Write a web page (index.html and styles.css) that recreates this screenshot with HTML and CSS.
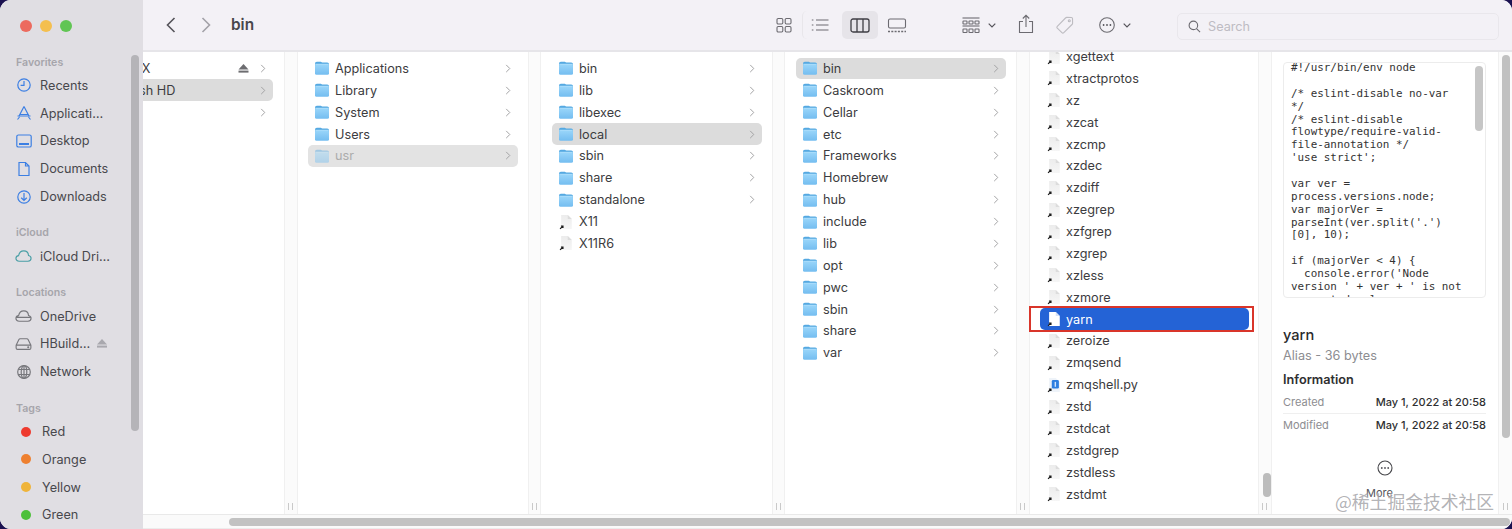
FILE: index.html
```html
<!DOCTYPE html>
<html lang="en">
<head>
<meta charset="utf-8">
<title>bin</title>
<link rel="stylesheet" href="styles.css">
</head>
<body>
<svg class="defs" width="0" height="0" aria-hidden="true">
  <defs>
    <linearGradient id="fb" x1="0" y1="0" x2="0" y2="1"><stop offset="0" stop-color="#9ad6fa"/><stop offset="1" stop-color="#74bdf0"/></linearGradient>
    <linearGradient id="dg" x1="0" y1="0" x2="0" y2="1"><stop offset="0" stop-color="#ececec"/><stop offset="1" stop-color="#f6f6f6"/></linearGradient>
    <symbol id="folder" viewBox="0 0 16 15">
      <path d="M1 3.2C1 2 1.7 1.2 2.9 1.2h3.4c.8 0 1.1.7 1.9.7h5c1.2 0 1.8.7 1.8 1.9V6H1z" fill="#55a9e2"/>
      <rect x="1" y="3.6" width="14" height="10.6" rx="1.5" fill="url(#fb)"/>
      <rect x="1" y="3.3" width="14" height=".7" fill="#b6e2fb"/>
    </symbol>
    <symbol id="alias" viewBox="0 0 16 18">
      <path d="M2.500 1h7.500l4.500 4.500V17h-12z" fill="url(#dg)"/>
      <path d="M10 1v4.500h4.500z" fill="#dcdcdc"/>
      <path d="M1.300 16.800l3-3M2.300 13.500h2.300v2.300" fill="none" stroke="#1c1c1c" stroke-width="1.300"/>
    </symbol>
    <symbol id="aliassel" viewBox="0 0 16 18">
      <path d="M2.500 1h7.500l4.500 4.500V17h-12z" fill="#fff"/>
      <path d="M10 1v4.500h4.500z" fill="#d5e2f8"/>
      <path d="M1.300 16.800l3-3M2.300 13.500h2.300v2.300" fill="none" stroke="#1c1c1c" stroke-width="1.300"/>
    </symbol>
    <symbol id="aliaspy" viewBox="0 0 16 18">
      <path d="M2.500 1h7.500l4.500 4.500V17h-12z" fill="#eef3f9"/>
      <rect x="5.500" y="3.500" width="8" height="9.500" rx="1.500" fill="#2f7fe0"/>
      <rect x="8.700" y="5.500" width="1.600" height="5.500" fill="#cfe2fa"/>
      <path d="M1.300 16.800l3-3M2.300 13.500h2.300v2.300" fill="none" stroke="#1c1c1c" stroke-width="1.300"/>
    </symbol>
    <symbol id="chev" viewBox="0 0 6 10">
      <path d="M1 1l4 4-4 4" fill="none" stroke="currentColor" stroke-width="1.1"/>
    </symbol>
    <symbol id="eject" viewBox="0 0 10 9">
      <path d="M5 0l5 5.4H0z" fill="currentColor"/><rect y="6.6" width="10" height="2" fill="currentColor"/>
    </symbol>
  </defs>
</svg>

<div class="window">
  <aside class="sidebar">
    <div class="lights"><span class="light red"></span><span class="light amber"></span><span class="light green"></span></div>
    <div class="sec-label">Favorites</div>
    <div class="side-row"><svg class="side-ic blue" viewBox="0 0 16 16"><circle cx="8" cy="8" r="6.2"/><path d="M8 4v4.4H4.6"/></svg><span>Recents</span></div>
    <div class="side-row"><svg class="side-ic blue" viewBox="0 0 16 16"><path d="M8 1.500L2.800 11.500M8 1.500l5.200 10M4 9.500h8M1.500 11h13M1.500 14.500l2-2.500M14.500 14.500l-2-2.500"/></svg><span>Applicati…</span></div>
    <div class="side-row"><svg class="side-ic blue" viewBox="0 0 16 16"><rect x=".8" y="2" width="14.4" height="12" rx="1.6"/><path d="M3 11h10" stroke-width="2"/></svg><span>Desktop</span></div>
    <div class="side-row"><svg class="side-ic blue" viewBox="0 0 16 16"><path d="M3 1.500h6.500L13 5v9.500H3zM9.500 1.500V5H13"/></svg><span>Documents</span></div>
    <div class="side-row"><svg class="side-ic blue" viewBox="0 0 16 16"><circle cx="8" cy="8" r="6.2"/><path d="M8 4v7.4M5.2 8.800L8 11.500l2.800-2.700"/></svg><span>Downloads</span></div>

    <div class="sec-label sec-gap">iCloud</div>
    <div class="side-row"><svg class="side-ic wide teal" viewBox="0 0 18 14"><path d="M4.500 12.500C2.500 12.500 1 11.200 1 9.500 1 8 2.100 6.800 3.800 6.600 4.400 3.600 6.600 1.600 9.300 1.600c2.800 0 4.800 2 5 4.800 1.600.3 2.700 1.500 2.700 3 0 1.800-1.400 3.100-3.300 3.100z"/></svg><span>iCloud Dri…</span></div>

    <div class="sec-label sec-gap">Locations</div>
    <div class="side-row"><svg class="side-ic wide gray" viewBox="0 0 18 14"><path d="M4.500 12.500C2.500 12.500 1 11.200 1 9.500 1 8 2.100 6.800 3.800 6.600 4.400 3.600 6.600 1.600 9.300 1.600c2.800 0 4.800 2 5 4.800 1.600.3 2.700 1.500 2.700 3 0 1.800-1.400 3.100-3.300 3.100zM1.400 8.500h15.200"/></svg><span>OneDrive</span></div>
    <div class="side-row"><svg class="side-ic wide gray" viewBox="0 0 18 14"><path d="M1.200 8.200L4 2.400c.3-.6.8-1 1.500-1h7c.7 0 1.200.4 1.500 1l2.800 5.800v3c0 .9-.7 1.500-1.500 1.500H2.700c-.8 0-1.500-.6-1.500-1.500zM1.200 8.200h15.600"/><circle cx="14" cy="10.500" r=".5"/></svg><span>HBuild…</span><svg class="side-eject"><use href="#eject"/></svg></div>
    <div class="side-row"><svg class="side-ic gray" viewBox="0 0 16 16"><circle cx="8" cy="8" r="6.300"/><ellipse cx="8" cy="8" rx="2.800" ry="6.300"/><path d="M2.300 5.500h11.400M2.300 10.500h11.400M8 1.700v12.600"/></svg><span>Network</span></div>

    <div class="sec-label sec-gap">Tags</div>
    <div class="side-row"><span class="dot d-red"></span><span>Red</span></div>
    <div class="side-row"><span class="dot d-orange"></span><span>Orange</span></div>
    <div class="side-row"><span class="dot d-yellow"></span><span>Yellow</span></div>
    <div class="side-row"><span class="dot d-green"></span><span>Green</span></div>
    <div class="side-thumb"></div>
  </aside>

  <main class="main">
    <header class="toolbar">
      <svg class="nav-ic" viewBox="0 0 12 18"><path d="M9.500 2L2.500 9l7 7"/></svg>
      <svg class="nav-ic nav-fwd" viewBox="0 0 12 18"><path d="M2.500 2l7 7-7 7"/></svg>
      <div class="title">bin</div>

      <div class="views">
        <div class="view"><svg class="tb-ic" viewBox="0 0 16 16"><rect x="1" y="1.500" width="5.800" height="5.500" rx="1.200"/><rect x="9.200" y="1.500" width="5.800" height="5.500" rx="1.200"/><rect x="1" y="9.500" width="5.800" height="5.500" rx="1.200"/><rect x="9.200" y="9.500" width="5.800" height="5.500" rx="1.200"/></svg></div>
        <div class="view view-list"><svg class="tb-ic tb-wide" viewBox="0 0 18 14"><path d="M5 2h12.500M5 7h12.500M5 12h12.500M.8 2h1.600M.8 7h1.600M.8 12h1.600"/></svg></div>
        <div class="view view-on"><svg class="tb-ic tb-col" viewBox="0 0 20 15"><rect x="1" y="1" width="18" height="13" rx="2"/><path d="M7 1v13M13 1v13"/></svg></div>
        <div class="view view-last"><svg class="tb-ic tb-col" viewBox="0 0 20 15"><rect x="1.500" y="1" width="17" height="9" rx="1.500"/><path d="M1 13.500h18" stroke-width="1.600" stroke-dasharray="2 1.300"/></svg></div>
      </div>
      <svg class="tb-ic tb-group" viewBox="0 0 18 17"><path d="M.5 1h17"/><rect x="1" y="4" width="4" height="3" rx=".5"/><rect x="7" y="4" width="4" height="3" rx=".5"/><rect x="13" y="4" width="4" height="3" rx=".5"/><path d="M.5 9h17"/><rect x="1" y="12" width="4" height="3.500" rx=".5"/><rect x="7" y="12" width="4" height="3.500" rx=".5"/><rect x="13" y="12" width="4" height="3.500" rx=".5"/></svg>
      <svg class="tb-chev" viewBox="0 0 8 5"><path d="M.7.700L4 4 7.300.700"/></svg>
      <svg class="tb-ic tb-share" viewBox="0 0 16 20"><path d="M8 13V1.500M4.800 4.500L8 1.300l3.200 3.200M5 7.500H1.500v11h13v-11H11"/></svg>
      <svg class="tb-ic tb-tag" viewBox="0 0 18 18"><path d="M1.300 10.300L9.500 2c.4-.4.800-.6 1.300-.6l4.600.1c.7 0 1.100.5 1.100 1.100l.1 4.600c0 .5-.2.900-.6 1.300l-8.200 8.200c-.6.600-1.300.6-1.900 0l-4.600-4.500c-.6-.6-.6-1.300 0-1.900z"/><circle cx="13.300" cy="4.700" r="1"/></svg>
      <svg class="tb-ic tb-more" viewBox="0 0 16 16"><circle cx="8" cy="8" r="7.300"/><circle class="fill" cx="4.600" cy="8" r=".9"/><circle class="fill" cx="8" cy="8" r=".9"/><circle class="fill" cx="11.400" cy="8" r=".9"/></svg>
      <svg class="tb-chev" viewBox="0 0 8 5"><path d="M.7.700L4 4 7.300.700"/></svg>
      <div class="search">
        <svg class="search-ic" viewBox="0 0 14 14"><circle cx="5.800" cy="5.800" r="4.600"/><path d="M9.200 9.200L13 13"/></svg>
        <span>Search</span>
      </div>
    </header>

    <div class="browser">
      <section class="col col-first">
        <div class="list list-first">
          <div class="row"><svg class="ic"></svg><span class="name">Mac OS X</span><svg class="row-eject"><use href="#eject"/></svg><svg class="chev"><use href="#chev"/></svg></div>
          <div class="row sel"><svg class="ic"></svg><span class="name">Macintosh HD</span><svg class="chev"><use href="#chev"/></svg></div>
          <div class="row"><svg class="ic"></svg><span class="name">Data</span><svg class="chev"><use href="#chev"/></svg></div>
        </div>
      </section>
      <div class="split s14"><i class="grip"></i></div>

      <section class="col c230">
        <div class="row"><svg class="ic"><use href="#folder"/></svg><span class="name">Applications</span><svg class="chev"><use href="#chev"/></svg></div>
        <div class="row"><svg class="ic"><use href="#folder"/></svg><span class="name">Library</span><svg class="chev"><use href="#chev"/></svg></div>
        <div class="row"><svg class="ic"><use href="#folder"/></svg><span class="name">System</span><svg class="chev"><use href="#chev"/></svg></div>
        <div class="row"><svg class="ic"><use href="#folder"/></svg><span class="name">Users</span><svg class="chev"><use href="#chev"/></svg></div>
        <div class="row sel hidden-item"><svg class="ic"><use href="#folder"/></svg><span class="name">usr</span><svg class="chev"><use href="#chev"/></svg></div>
      </section>
      <div class="split s13"><i class="grip"></i></div>

      <section class="col c231">
        <div class="row"><svg class="ic"><use href="#folder"/></svg><span class="name">bin</span><svg class="chev"><use href="#chev"/></svg></div>
        <div class="row"><svg class="ic"><use href="#folder"/></svg><span class="name">lib</span><svg class="chev"><use href="#chev"/></svg></div>
        <div class="row"><svg class="ic"><use href="#folder"/></svg><span class="name">libexec</span><svg class="chev"><use href="#chev"/></svg></div>
        <div class="row sel"><svg class="ic"><use href="#folder"/></svg><span class="name">local</span><svg class="chev"><use href="#chev"/></svg></div>
        <div class="row"><svg class="ic"><use href="#folder"/></svg><span class="name">sbin</span><svg class="chev"><use href="#chev"/></svg></div>
        <div class="row"><svg class="ic"><use href="#folder"/></svg><span class="name">share</span><svg class="chev"><use href="#chev"/></svg></div>
        <div class="row"><svg class="ic"><use href="#folder"/></svg><span class="name">standalone</span><svg class="chev"><use href="#chev"/></svg></div>
        <div class="row"><svg class="ic"><use href="#alias"/></svg><span class="name">X11</span></div>
        <div class="row"><svg class="ic"><use href="#alias"/></svg><span class="name">X11R6</span></div>
      </section>
      <div class="split s13"><i class="grip"></i></div>

      <section class="col c231">
        <div class="row sel"><svg class="ic"><use href="#folder"/></svg><span class="name">bin</span><svg class="chev"><use href="#chev"/></svg></div>
        <div class="row"><svg class="ic"><use href="#folder"/></svg><span class="name">Caskroom</span><svg class="chev"><use href="#chev"/></svg></div>
        <div class="row"><svg class="ic"><use href="#folder"/></svg><span class="name">Cellar</span><svg class="chev"><use href="#chev"/></svg></div>
        <div class="row"><svg class="ic"><use href="#folder"/></svg><span class="name">etc</span><svg class="chev"><use href="#chev"/></svg></div>
        <div class="row"><svg class="ic"><use href="#folder"/></svg><span class="name">Frameworks</span><svg class="chev"><use href="#chev"/></svg></div>
        <div class="row"><svg class="ic"><use href="#folder"/></svg><span class="name">Homebrew</span><svg class="chev"><use href="#chev"/></svg></div>
        <div class="row"><svg class="ic"><use href="#folder"/></svg><span class="name">hub</span><svg class="chev"><use href="#chev"/></svg></div>
        <div class="row"><svg class="ic"><use href="#folder"/></svg><span class="name">include</span><svg class="chev"><use href="#chev"/></svg></div>
        <div class="row"><svg class="ic"><use href="#folder"/></svg><span class="name">lib</span><svg class="chev"><use href="#chev"/></svg></div>
        <div class="row"><svg class="ic"><use href="#folder"/></svg><span class="name">opt</span><svg class="chev"><use href="#chev"/></svg></div>
        <div class="row"><svg class="ic"><use href="#folder"/></svg><span class="name">pwc</span><svg class="chev"><use href="#chev"/></svg></div>
        <div class="row"><svg class="ic"><use href="#folder"/></svg><span class="name">sbin</span><svg class="chev"><use href="#chev"/></svg></div>
        <div class="row"><svg class="ic"><use href="#folder"/></svg><span class="name">share</span><svg class="chev"><use href="#chev"/></svg></div>
        <div class="row"><svg class="ic"><use href="#folder"/></svg><span class="name">var</span><svg class="chev"><use href="#chev"/></svg></div>
      </section>
      <div class="split s14"><i class="grip"></i></div>

      <section class="col c228">
        <div class="list list-scrolled">
          <div class="row"><svg class="ic"><use href="#alias"/></svg><span class="name">xgettext</span></div>
          <div class="row"><svg class="ic"><use href="#alias"/></svg><span class="name">xtractprotos</span></div>
          <div class="row"><svg class="ic"><use href="#alias"/></svg><span class="name">xz</span></div>
          <div class="row"><svg class="ic"><use href="#alias"/></svg><span class="name">xzcat</span></div>
          <div class="row"><svg class="ic"><use href="#alias"/></svg><span class="name">xzcmp</span></div>
          <div class="row"><svg class="ic"><use href="#alias"/></svg><span class="name">xzdec</span></div>
          <div class="row"><svg class="ic"><use href="#alias"/></svg><span class="name">xzdiff</span></div>
          <div class="row"><svg class="ic"><use href="#alias"/></svg><span class="name">xzegrep</span></div>
          <div class="row"><svg class="ic"><use href="#alias"/></svg><span class="name">xzfgrep</span></div>
          <div class="row"><svg class="ic"><use href="#alias"/></svg><span class="name">xzgrep</span></div>
          <div class="row"><svg class="ic"><use href="#alias"/></svg><span class="name">xzless</span></div>
          <div class="row"><svg class="ic"><use href="#alias"/></svg><span class="name">xzmore</span></div>
          <div class="row active"><svg class="ic"><use href="#aliassel"/></svg><span class="name">yarn</span></div>
          <div class="row"><svg class="ic"><use href="#alias"/></svg><span class="name">zeroize</span></div>
          <div class="row"><svg class="ic"><use href="#alias"/></svg><span class="name">zmqsend</span></div>
          <div class="row"><svg class="ic"><use href="#aliaspy"/></svg><span class="name">zmqshell.py</span></div>
          <div class="row"><svg class="ic"><use href="#alias"/></svg><span class="name">zstd</span></div>
          <div class="row"><svg class="ic"><use href="#alias"/></svg><span class="name">zstdcat</span></div>
          <div class="row"><svg class="ic"><use href="#alias"/></svg><span class="name">zstdgrep</span></div>
          <div class="row"><svg class="ic"><use href="#alias"/></svg><span class="name">zstdless</span></div>
          <div class="row"><svg class="ic"><use href="#alias"/></svg><span class="name">zstdmt</span></div>
        </div>
      </section>
      <div class="split s14"><i class="grip"></i><i class="col-thumb"></i></div>

      <section class="preview">
        <div class="code-box">
<pre class="code">#!/usr/bin/env node

/* eslint-disable no-var
*/
/* eslint-disable
flowtype/require-valid-
file-annotation */
'use strict';

var ver =
process.versions.node;
var majorVer =
parseInt(ver.split('.')
[0], 10);

if (majorVer &lt; 4) {
  console.error('Node
version ' + ver + ' is not
supported, please use</pre>
          <i class="code-thumb"></i>
        </div>
        <div class="p-name">yarn</div>
        <div class="p-kind">Alias - 36 bytes</div>
        <div class="p-head">Information</div>
        <div class="p-row p-line"><span class="p-key">Created</span><span class="p-val">May 1, 2022 at 20:58</span></div>
        <div class="p-row"><span class="p-key">Modified</span><span class="p-val">May 1, 2022 at 20:58</span></div>
        <svg class="p-more" viewBox="0 0 16 16"><circle cx="8" cy="8" r="7"/><circle class="fill" cx="4.800" cy="8" r=".9"/><circle class="fill" cx="8" cy="8" r=".9"/><circle class="fill" cx="11.200" cy="8" r=".9"/></svg>
        <div class="p-more-label">More</div>
      </section>
      <div class="split s14 split-last"><i class="grip"></i><i class="preview-thumb"></i></div>
    </div>

    <div class="hbar"><i class="hthumb"></i></div>
  </main>

  <div class="annot"></div>
  <div class="watermark">@稀土掘金技术社区</div>
</div>
</body>
</html>
```
FILE: styles.css
```css
* { box-sizing: border-box; }
html, body { margin: 0; height: 100%; }
body {
  background: #1b1150;
  overflow: hidden;
  font-family: Inter, "Noto Sans", sans-serif;
  font-size: 12.7px;
  color: #3c3c40;
}
.defs { position: absolute; }
.window {
  position: relative;
  display: flex;
  width: 1512px;
  height: 529px;
  border-radius: 11px;
  overflow: hidden;
  background: #fff;
}

/* sidebar */
.sidebar {
  position: relative;
  flex: 0 0 143px;
  background: #e0dee3;
  padding-left: 16px;
}
.lights { display: flex; gap: 8px; height: 53.5px; padding: 20px 0 0 4px; }
.light { width: 12px; height: 12px; border-radius: 50%; }
.red { background: #ec6a5e; }
.amber { background: #f4bf4f; }
.green { background: #61c554; }
.sec-label {
  height: 18px;
  line-height: 18px;
  font-size: 10.6px;
  font-weight: 600;
  color: #a6a5ab;
}
.sec-gap { margin-top: 14px; }
.side-row {
  display: flex;
  align-items: center;
  height: 27.8px;
  color: #48484d;
}
.side-ic {
  flex: 0 0 16px;
  width: 16px;
  height: 16px;
  margin-right: 8px;
  fill: none;
  stroke-width: 1.2;
}
.side-ic.wide { flex-basis: 17px; width: 17px; height: 14px; margin-left: -1px; }
.blue { stroke: #3c7fe3; }
.teal { stroke: #4a9fa6; }
.gray { stroke: #77777c; }
.side-eject { width: 10px; height: 9px; margin-left: 7px; color: #a9a8ae; }
.dot { width: 10px; height: 10px; margin: 0 11px 0 5px; border-radius: 50%; }
.d-red { background: #ee3a2e; }
.d-orange { background: #ee8030; }
.d-yellow { background: #efb43a; }
.d-green { background: #4cc03a; }
.side-thumb {
  position: absolute;
  left: 131px;
  top: 55px;
  width: 8px;
  height: 376px;
  border-radius: 4px;
  background: #b5b4b8;
}

/* main */
.main { flex: 1; min-width: 0; display: flex; flex-direction: column; }
.toolbar {
  flex: 0 0 52px;
  display: flex;
  align-items: center;
  padding: 0 13px 0 22px;
  background: #f3f1f6;
  border-bottom: 2px solid #e6e5e9;
}
.nav-ic {
  width: 12px;
  height: 18px;
  fill: none;
  stroke: #55545a;
  stroke-width: 1.6;
}
.nav-fwd { margin-left: 23px; stroke: #a3a2a8; }
.title {
  margin-left: 19px;
  font-size: 15.4px;
  font-weight: 600;
  color: #47464b;
  margin-bottom: 1px;
}
.views { display: flex; align-items: center; margin-left: auto; }
.view {
  display: flex;
  align-items: center;
  justify-content: center;
  width: 36px;
  height: 28px;
  border-radius: 5px;
}
.view-list { border-left: 1px solid #e8e6ea; margin-right: 4px; padding-right: 1px; }
.view-on { background: #e6e4e9; }
.view-last { margin-left: 1px; }
.tb-ic { flex: none; fill: none; stroke: #6c6b71; stroke-width: 1.1; width: 16px; height: 16px; }
.tb-ic .fill, .p-more .fill { fill: #55545a; stroke: none; }
.tb-wide { width: 18px; height: 14px; }
.tb-col { width: 20px; height: 15px; }
.view-on .tb-col { stroke: #3f3e44; stroke-width: 1.3; }
.tb-group { width: 18px; height: 17px; margin-left: 47px; }
.tb-chev {
  flex: none;
  width: 8px;
  height: 5px;
  margin-left: 8px;
  fill: none;
  stroke: #55545a;
  stroke-width: 1.2;
}
.tb-share { width: 16px; height: 20px; margin-left: 22px; margin-bottom: 2px; }
.tb-tag { width: 18px; height: 18px; margin-left: 22px; stroke: #bdbcc1; }
.tb-more { margin-left: 25px; }
.search {
  flex: 0 0 322px;
  display: flex;
  align-items: center;
  gap: 7px;
  height: 27px;
  margin-left: 46px;
  margin-top: 2px;
  padding-left: 10px;
  border: 1px solid #e9e7ec;
  border-radius: 5px;
  color: #bebcc3;
}
.search-ic { width: 13px; height: 13px; fill: none; stroke: #6c6b71; stroke-width: 1.2; }

/* columns */
.browser { flex: 1; min-height: 0; display: flex; background: #fff; overflow: hidden; }
.col { flex: none; height: 100%; padding-top: 5.5px; overflow: hidden; }
.col-first { width: 141px; display: flex; justify-content: flex-end; }
.list-first { flex: 0 0 231px; padding: 0 11px; }
.c230 { width: 230px; padding-left: 10px; padding-right: 10px; }
.c231 { width: 231px; padding-left: 11px; padding-right: 10px; }
.c228 { width: 228px; padding-left: 10px; padding-right: 9px; }
.c228 .ic { margin-right: 4px; }
.list-scrolled { margin-top: -11.9px; }
.row {
  display: flex;
  align-items: center;
  height: 21.875px;
  padding: 0 7px 0 6px;
  border-radius: 5px;
}
.ic { flex: 0 0 16px; width: 16px; height: 16px; margin-right: 5px; }
.name { flex: 1; white-space: nowrap; }
.chev { flex: none; width: 6px; height: 9px; color: #a2a2a4; }
.row-eject { flex: none; width: 11px; height: 9px; margin-right: 11px; color: #6d6d70; }
.sel { background: #dcdcdc; }
.hidden-item { background: #e3e3e3; color: #acacac; }
.hidden-item .ic { opacity: .45; }
.active { background: #2463d6; color: #fff; }
.split {
  position: relative;
  flex: none;
  height: 100%;
  background: #fbfbfb;
  border-left: 1px solid #f0f0f0;
  border-right: 1px solid #f0f0f0;
}
.s13 { width: 13px; }
.s14 { width: 14px; }
.split-last { border-right: 0; }
.grip {
  position: absolute;
  bottom: 4px;
  left: 50%;
  width: 5px;
  height: 7px;
  margin-left: -3px;
  border-left: 1.500px solid #c9c9c9;
  border-right: 1.500px solid #c9c9c9;
}
.col-thumb {
  position: absolute;
  top: 421px;
  left: 4px;
  width: 8px;
  height: 24px;
  border-radius: 4px;
  background: #bcbcbc;
}
.preview-thumb {
  position: absolute;
  top: 3px;
  left: 3px;
  width: 8px;
  height: 383px;
  border-radius: 4px;
  background: #c1c1c1;
}

/* preview */
.preview {
  flex: none;
  display: flex;
  flex-direction: column;
  width: 226px;
  height: 100%;
  padding: 10px 12px 0 11px;
  overflow: hidden;
}
.code-box {
  position: relative;
  flex: 0 0 236px;
  padding-left: 7px;
  border: 1px solid #ececec;
  border-radius: 4px;
  overflow: hidden;
}
.code {
  margin: 0;
  font-family: "DejaVu Sans Mono", "Liberation Mono", monospace;
  font-size: 10.9px;
  line-height: 12.87px;
  color: #333;
  position: relative;
  top: -1px;
}
.code-thumb {
  position: absolute;
  top: 3px;
  right: 2px;
  width: 8px;
  height: 65px;
  border-radius: 4px;
  background: #c6c6c6;
}
.p-name { height: 20px; line-height: 20px; margin-top: 27px; font-size: 14.6px; font-weight: 500; color: #2a2a2c; }
.p-kind { height: 20px; line-height: 20px; margin-top: 1px; color: #8d8d91; }
.p-head { height: 20px; line-height: 20px; margin-top: 4px; font-weight: 600; color: #2f2f31; }
.p-row {
  display: flex;
  justify-content: space-between;
  align-items: center;
  height: 22px;
  font-size: 11px;
}
.p-line { margin-top: .5px; border-bottom: 1px solid #efefef; height: 23px; }
.p-key { color: #8d8d91; }
.p-val { color: #2f2f31; font-weight: 500; }
.p-more {
  flex: none;
  align-self: center;
  width: 16px;
  height: 16px;
  margin-top: 24px;
  fill: none;
  stroke: #47474b;
  stroke-width: 1.1;
}
.p-more-label { align-self: center; margin: 10px 10px 0 0; font-size: 11px; line-height: 14px; color: #55555a; }
.hbar {
  position: relative;
  flex: 0 0 15px;
  background: #fafafa;
  border-top: 1px solid #e9e9e9;
  border-bottom: 1px solid #ececec;
}
.hthumb {
  position: absolute;
  left: 86px;
  top: 3px;
  width: 1281px;
  height: 8px;
  border-radius: 4px;
  background: #c2c2c2;
}

/* overlays */
.annot {
  position: absolute;
  left: 1029px;
  top: 306px;
  width: 225px;
  height: 26px;
  border: 2px solid #d9352a;
}
.watermark {
  position: absolute;
  left: 1335px;
  top: 489px;
  font-family: "Noto Sans CJK SC", sans-serif;
  font-size: 17.800px;
  line-height: 24px;
  white-space: nowrap;
  color: rgba(130, 130, 135, .62);
  text-shadow: 0 0 2px #fff;
}
```
